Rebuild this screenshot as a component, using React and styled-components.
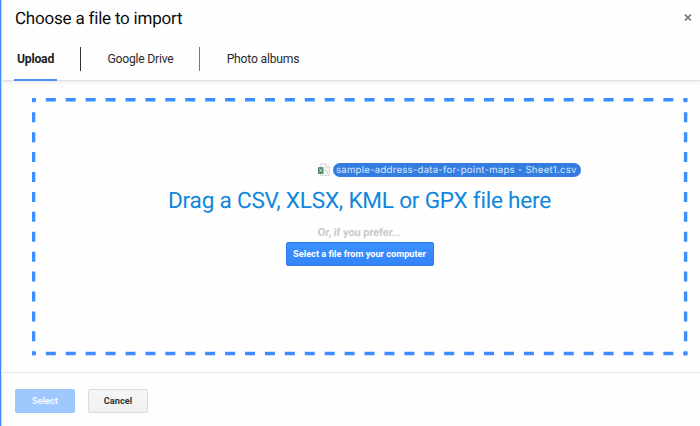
import React from "react";
import styled, { createGlobalStyle, css } from "styled-components";

const GlobalStyle = createGlobalStyle`
  *, *::before, *::after { box-sizing: border-box; }
  body { margin: 0; background: #fff; font-family: Roboto, sans-serif; text-rendering: geometricPrecision; }
`;

const Dialog = styled.main`
  display: flex;
  flex-direction: column;
  width: 700px;
  height: 426px;
  overflow: hidden;
  background: #fefefe;
  box-shadow: inset 1px 0 0 #3b8bff, inset 2px 0 0 #c9e0ff;
`;

const Header = styled.header`
  height: 81px;
  margin-left: 1px;
  flex: none;
  border-bottom: 1px solid #e2e2e2;
  box-shadow: 0 1px 4px rgba(0, 0, 0, 0.1);
  clip-path: inset(0 0 -8px 0);
`;

const TitleRow = styled.div`
  display: flex;
  justify-content: space-between;
  height: 38px;
  padding: 7px 8px 0 14px;
`;

const Title = styled.h1`
  margin: 0;
  font-size: 17px;
  line-height: 25px;
  font-weight: 400;
  letter-spacing: -0.2px;
  color: #0c0c0c;
`;

const CloseButton = styled.button`
  display: flex;
  width: 8px;
  height: 8px;
  margin: 7px 0 0;
  padding: 0;
  border: 0;
  background: none;
  color: #777;
`;

const Tabs = styled.nav`
  display: flex;
  height: 43px;
  padding-left: 13px;
`;

const Tab = styled.button`
  flex: none;
  width: ${(p) => p.$width}px;
  height: 43px;
  padding: 2px 0 0;
  border: 0;
  border-bottom: 2px solid ${(p) => (p.$active ? "#4a92f7" : "transparent")};
  background: none;
  font: ${(p) => (p.$active ? 700 : 400)} 12.2px/39px Roboto, sans-serif;
  letter-spacing: -0.22px;
  color: ${(p) => (p.$active ? "#222" : "#2b2b2b")};
  white-space: nowrap;
`;

const Separator = styled.span`
  flex: none;
  width: 1px;
  height: 24px;
  margin: 9px ${(p) => p.$right}px 0 ${(p) => p.$left}px;
  background: ${(p) => p.$color};
`;

const Body = styled.section`
  flex: 1;
  padding: 17px 12px 16px 32px;
`;

const DropZone = styled.div`
  position: relative;
  display: flex;
  flex-direction: column;
  align-items: center;
  width: 655px;
  height: 258px;
  padding-top: 65px;
`;

const DashedOutline = styled.svg`
  position: absolute;
  inset: 0;
  pointer-events: none;
`;

const DraggedFile = styled.div`
  display: flex;
  align-items: center;
  align-self: flex-start;
  gap: 3px;
  height: 14px;
  margin-left: 286px;
`;

const FileName = styled.span`
  width: 248px;
  height: 14px;
  padding-left: 3px;
  border-radius: 7px;
  background: #347de0;
  font: 400 9.6px/15px Inter, sans-serif;
  letter-spacing: 0.25px;
  color: #d9e8fb;
  white-space: nowrap;
`;

const Prompt = styled.h2`
  margin: 9px 0 0;
  font-size: 22.6px;
  line-height: 30px;
  font-weight: 400;
  letter-spacing: -0.23px;
  color: #1087dc;
  white-space: nowrap;
`;

const Hint = styled.p`
  margin: 8px 0 0;
  font-size: 11px;
  line-height: 17px;
  font-weight: 700;
  letter-spacing: -0.08px;
  color: #c9c9c9;
`;

const looks = {
  primary: css`
    border-color: #2d7be8;
    background: linear-gradient(#3c90ff, #3384f8);
    color: #fff;
  `,
  disabled: css`
    border-color: #9bc5ff;
    background: #9fc8ff;
    color: #f2f8ff;
  `,
  plain: css`
    border-color: #dcdcdc;
    background: linear-gradient(#f6f6f6, #f0f0f0);
    color: #333;
  `,
};

const Button = styled.button`
  flex: none;
  width: ${(p) => p.$width}px;
  height: 24px;
  padding: 0;
  border: 1px solid;
  border-radius: 2px;
  font: 700 9.2px/22px Roboto, sans-serif;
  white-space: nowrap;
  ${(p) => looks[p.$look]}
`;

const BrowseSlot = styled.div`
  display: flex;
  margin-top: 1px;
`;

const Footer = styled.footer`
  display: flex;
  gap: 13px;
  flex: none;
  height: 54px;
  margin-left: 1px;
  padding: 16px 14px 0;
  border-top: 1px solid #e8e8e8;
`;

function CloseIcon() {
  return (
    <svg width="8" height="8" viewBox="0 0 8 8" fill="none" stroke="currentColor" strokeWidth="1.7">
      <path d="M.9 .6 6.9 6.5M6.9 .6.9 6.5" />
    </svg>
  );
}

function SpreadsheetIcon() {
  return (
    <svg width="12" height="14" viewBox="0 0 12 14">
      <path d="M2.5.8h5.7l3.1 3.1v8.6H2.5z" fill="#f7f7f7" stroke="#d3d3d3" strokeWidth=".8" />
      <path d="M8 .8v3.3h3.3" fill="#fff" stroke="#c4c4c4" strokeWidth=".8" />
      <path d="M7.4 6.2 10 11" stroke="#d0d0d0" />
      <path d="M0 4.2h5.4v6.6H0z" fill="#45805d" />
      <path d="m1.3 5.7 2.7 3.6M4 5.7 1.3 9.3" stroke="#e4f0e8" strokeWidth=".9" />
    </svg>
  );
}

const PITCH = 19.92;
const DASH = `10 ${PITCH - 10}`;

function Outline() {
  return (
    <DashedOutline width="657" height="258" viewBox="0 0 657 258" stroke="#3b8eff" strokeWidth="3.4">
      <path d="M0 1.8H655.4" strokeDasharray={DASH} strokeDashoffset="6.1" />
      <path d="M0 255.5H655.4" strokeDasharray={DASH} strokeDashoffset="6.1" />
      <path d="M1.6 .2V257.3" strokeDasharray={DASH} strokeDashoffset="5.9" />
      <path d="M653.6 .2V257.3" strokeDasharray={DASH} strokeDashoffset="5.9" />
    </DashedOutline>
  );
}

export default function App() {
  return (
    <>
      <GlobalStyle />
      <Dialog>
        <Header>
          <TitleRow>
            <Title>Choose a file to import</Title>
            <CloseButton aria-label="Close">
              <CloseIcon />
            </CloseButton>
          </TitleRow>
          <Tabs>
            <Tab $active $width={43}>Upload</Tab>
            <Separator $left={23} $right={19} $color="#333" />
            <Tab $width={81}>Google Drive</Tab>
            <Separator $left={18} $right={19} $color="#777" />
            <Tab $width={88}>Photo albums</Tab>
          </Tabs>
        </Header>
        <Body>
          <DropZone>
            <Outline />
            <DraggedFile>
              <SpreadsheetIcon />
              <FileName>sample-address-data-for-point-maps - Sheet1.csv</FileName>
            </DraggedFile>
            <Prompt>Drag a CSV, XLSX, KML or GPX file here</Prompt>
            <Hint>Or, if you prefer...</Hint>
            <BrowseSlot>
              <Button $look="primary" $width={148}>Select a file from your computer</Button>
            </BrowseSlot>
          </DropZone>
        </Body>
        <Footer>
          <Button $look="disabled" $width={60} disabled>Select</Button>
          <Button $look="plain" $width={60}>Cancel</Button>
        </Footer>
      </Dialog>
    </>
  );
}
